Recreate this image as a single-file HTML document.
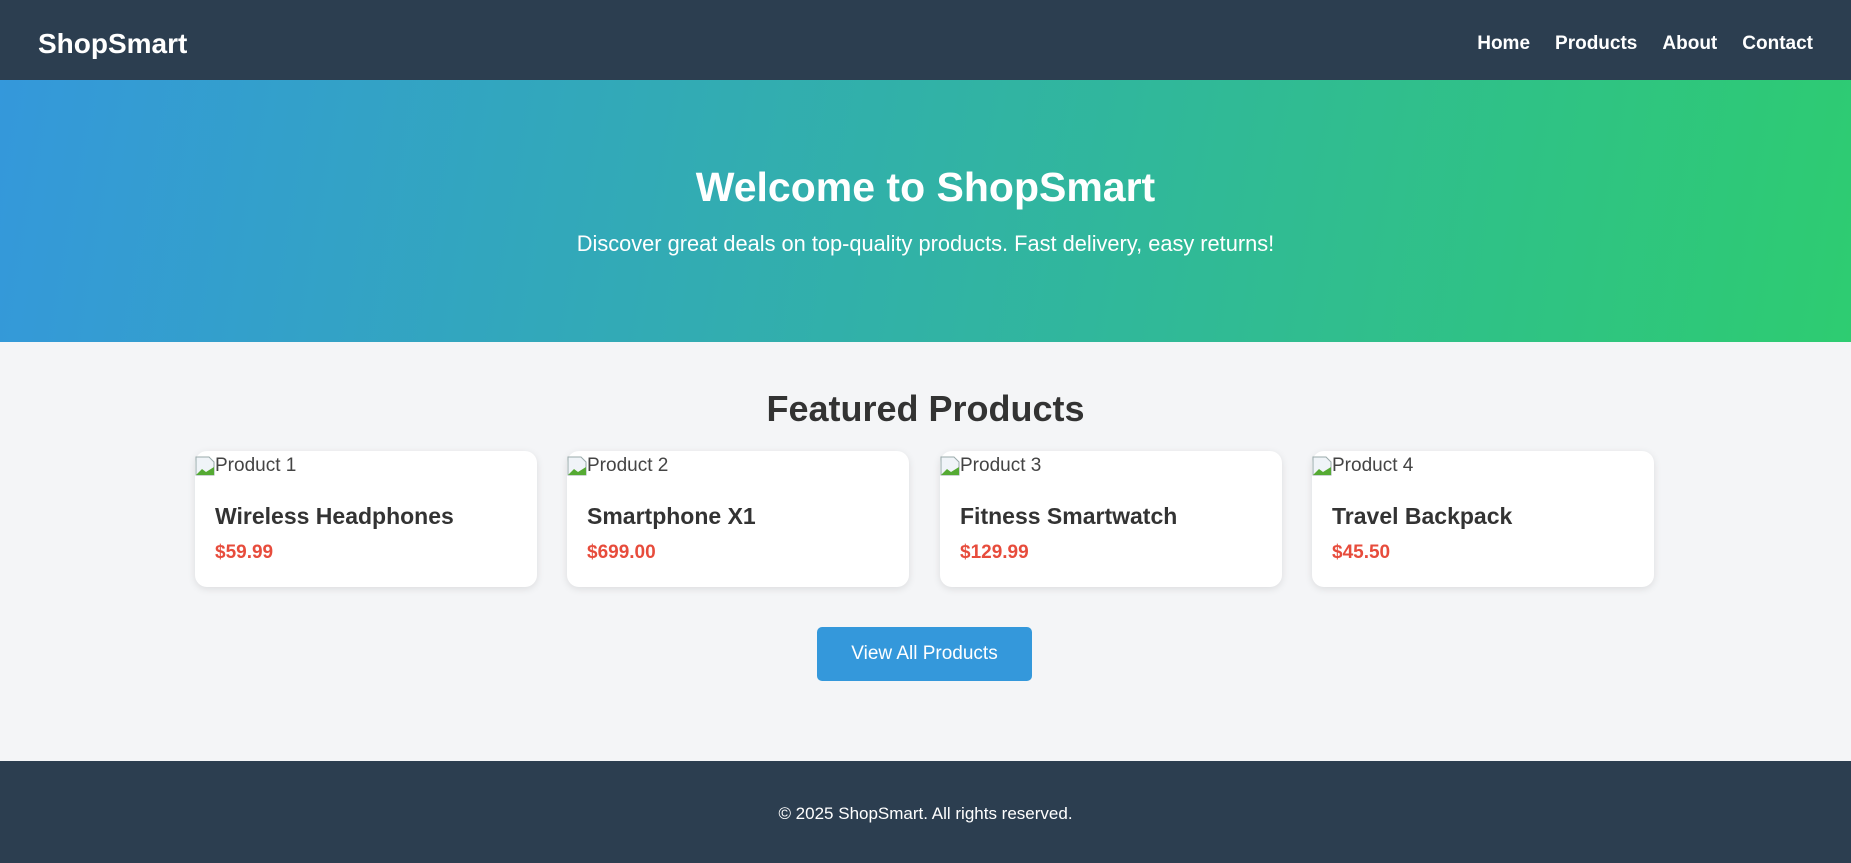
<!DOCTYPE html>
<html><head><meta charset="utf-8"><style>
*{box-sizing:border-box;margin:0;padding:0}
body{width:1851px;height:863px;overflow:hidden;font-family:"Liberation Sans",sans-serif;background:#f4f5f7;color:#333}
nav{height:80px;background:#2c3e50;display:flex;align-items:center;justify-content:space-between;padding:8px 38px 0;color:#fff}
nav .logo{font-size:28px;font-weight:bold}
nav ul{display:flex;list-style:none;gap:25px;font-size:19px;font-weight:bold}
.hero{height:262px;background:linear-gradient(100deg,#3498db,#2ecc71);color:#fff;text-align:center;padding-top:84px}
.hero h1{font-size:41px;font-weight:bold}
.hero p{font-size:21.8px;margin-top:20px}
h2{text-align:center;font-size:36px;margin-top:46px;height:63px}
.cards{position:relative;height:140px}
.card{position:absolute;top:0;width:342px;height:136px;background:#fff;border-radius:12px;box-shadow:0 2px 8px rgba(0,0,0,.1)}
.alt{font-size:19px;color:#444;padding-top:4px;height:38px;display:flex;align-items:flex-start}
.alt svg{margin-top:1px}
.card h3{font-size:23px;padding-left:20px;margin-top:14px}
.price{color:#e74c3c;font-weight:bold;font-size:19px;padding-left:20px;margin-top:12px}
.btn{position:absolute;left:817px;top:627px;width:215px;height:54px;background:#3498db;border-radius:5px;color:#fff;font-size:19px;display:flex;align-items:center;justify-content:center}
footer{position:absolute;top:761px;left:0;width:1851px;height:102px;background:#2c3e50;color:#fff;text-align:center;font-size:17px;padding-top:43px}
</style></head><body>
<nav><div class="logo">ShopSmart</div><ul><li>Home</li><li>Products</li><li>About</li><li>Contact</li></ul></nav>
<div class="hero"><h1>Welcome to ShopSmart</h1><p>Discover great deals on top-quality products. Fast delivery, easy returns!</p></div>
<h2>Featured Products</h2>
<div class="cards">
<div class="card" style="left:195px"><div class="alt"><svg width="20" height="20" viewBox="0 0 20 20"><path d="M1 1h13l5 5v13H1z" fill="#f0f4f8" stroke="#9aa"/><path d="M1 19l6-6 4 3 8-5v8z" fill="#5a3"/></svg>Product 1</div><h3>Wireless Headphones</h3><div class="price">$59.99</div></div>
<div class="card" style="left:567px"><div class="alt"><svg width="20" height="20" viewBox="0 0 20 20"><path d="M1 1h13l5 5v13H1z" fill="#f0f4f8" stroke="#9aa"/><path d="M1 19l6-6 4 3 8-5v8z" fill="#5a3"/></svg>Product 2</div><h3>Smartphone X1</h3><div class="price">$699.00</div></div>
<div class="card" style="left:940px"><div class="alt"><svg width="20" height="20" viewBox="0 0 20 20"><path d="M1 1h13l5 5v13H1z" fill="#f0f4f8" stroke="#9aa"/><path d="M1 19l6-6 4 3 8-5v8z" fill="#5a3"/></svg>Product 3</div><h3>Fitness Smartwatch</h3><div class="price">$129.99</div></div>
<div class="card" style="left:1312px"><div class="alt"><svg width="20" height="20" viewBox="0 0 20 20"><path d="M1 1h13l5 5v13H1z" fill="#f0f4f8" stroke="#9aa"/><path d="M1 19l6-6 4 3 8-5v8z" fill="#5a3"/></svg>Product 4</div><h3>Travel Backpack</h3><div class="price">$45.50</div></div>
</div>
<div class="btn">View All Products</div>
<footer>© 2025 ShopSmart. All rights reserved.</footer>
</body></html>
